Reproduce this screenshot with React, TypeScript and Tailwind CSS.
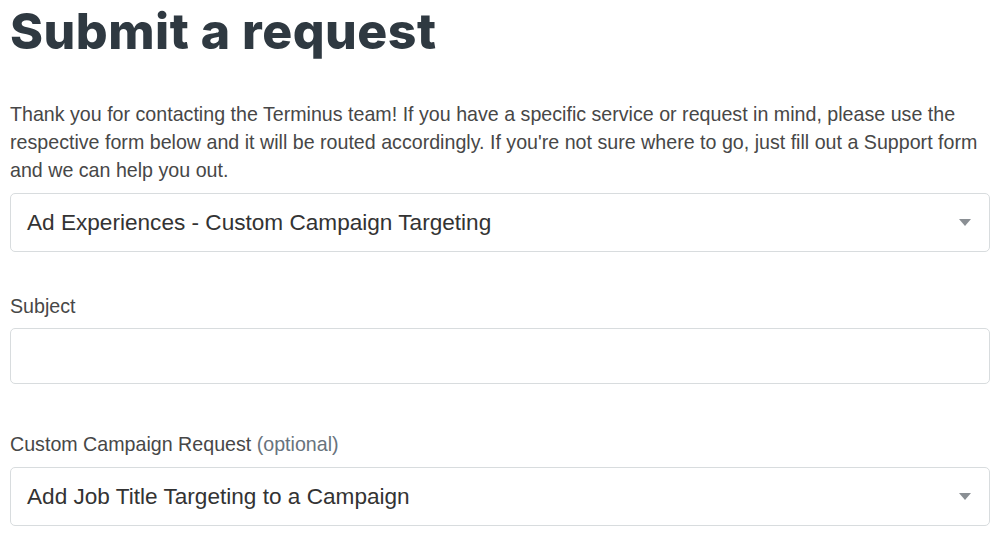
const BODY = "font-['Liberation_Sans',Arial,sans-serif]";

function Caret() {
  return (
    <svg width="12" height="7" viewBox="0 0 12 7" aria-hidden>
      <path d="M0 0h12L6 7z" fill="#8a8f94" />
    </svg>
  );
}

function SelectBox({ value }: { value: string }) {
  return (
    <div className="flex h-[59px] items-center justify-between rounded-[5px] border border-[#d8dcde] bg-white pl-4 pr-[18px]">
      <span className="text-[22.6px] text-[#333]">{value}</span>
      <Caret />
    </div>
  );
}

export default function App() {
  return (
    <div className={`min-h-[534px] bg-white px-[10px] ${BODY}`}>
      <h1 className="font-['Inter',sans-serif] text-[50px] leading-[62px] font-extrabold tracking-[0.5px] text-[#2f3941]">
        Submit a request
      </h1>

      <p className="mt-[38px] text-[19.65px] leading-[28px] text-[#474747]">
        Thank you for contacting the Terminus team! If you have a specific service or request in mind, please use the
        respective form below and it will be routed accordingly. If you're not sure where to go, just fill out a Support
        form and we can help you out.
      </p>

      <div className="mt-[9px]">
        <SelectBox value="Ad Experiences - Custom Campaign Targeting" />
      </div>

      <label className="mt-[42px] block text-[19.65px] leading-[24px] text-[#474747]">Subject</label>
      <div className="mt-[10px] h-[56px] rounded-[5px] border border-[#d8dcde] bg-white" />

      <label className="mt-[48px] block text-[19.65px] leading-[24px] text-[#474747]">
        Custom Campaign Request <span className="text-[#68737d]">(optional)</span>
      </label>
      <div className="mt-[11px]">
        <SelectBox value="Add Job Title Targeting to a Campaign" />
      </div>
    </div>
  );
}
